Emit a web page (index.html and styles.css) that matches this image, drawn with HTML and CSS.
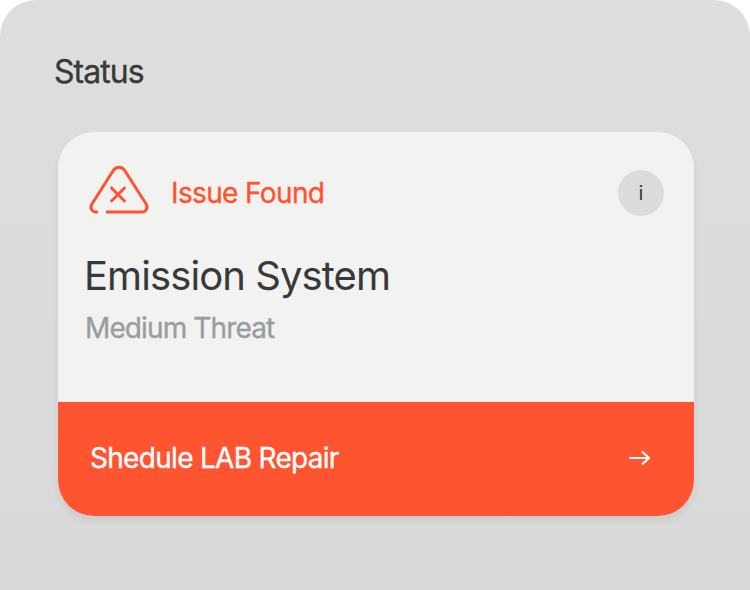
FILE: index.html
```html
<!DOCTYPE html>
<html lang="en">
<head>
<meta charset="utf-8">
<title>Status</title>
<link rel="stylesheet" href="styles.css">
</head>
<body>
<main class="panel">
  <h1 class="heading"><span>Status</span></h1>
  <section class="card">
    <div class="details">
      <div class="alert">
        <svg class="warning" width="64" height="54" viewBox="0 0 64 54" fill="none" stroke="currentColor" stroke-width="3" stroke-linejoin="round">
          <path d="M11 49H9C4.500 49 2.500 44.500 5.200 40.500L26.300 7.500C29.200 3 34.800 3 37.700 7.500L58.800 40.500C61.500 44.500 59.500 49 55 49H19"/>
          <path stroke-linecap="round" d="M24.500 25L37.500 38M37.500 25L24.500 38"/>
        </svg>
        <span class="alert-text">Issue Found</span>
        <button class="info" aria-label="Information">i</button>
      </div>
      <h2 class="system"><span>Emission System</span></h2>
      <p class="threat"><span>Medium Threat</span></p>
    </div>
    <button class="repair">
      <span class="repair-text">Shedule LAB Repair</span>
      <svg class="arrow" width="24" height="20" viewBox="0 0 24 20" fill="none" stroke="currentColor" stroke-width="2"><path d="M1 10H22M14 3.500L21 10L14 16.500"/></svg>
    </button>
  </section>
</main>
</body>
</html>
```

FILE: styles.css
```css
* { box-sizing: border-box; }
body { margin: 0; background: #fff; font-family: Inter, "Liberation Sans", sans-serif; color: #393939; }
h1, h2, p { margin: 0; font-weight: 400; }
button { border: 0; font: inherit; }
.panel { height: 590px; padding: 52px 56px 0 58px; border-radius: 36px 36px 0 0; background: linear-gradient(#dedede, #dadada); }
.heading, .alert-text, .threat, .repair-text { -webkit-text-stroke: .35px currentColor; }
.heading { height: 80px; margin-left: -4px; font-size: 32px; line-height: 40px; letter-spacing: -.95px; }
.card { height: 384px; overflow: hidden; border-radius: 36px; background: #f2f2f0; box-shadow: 0 6px 10px -1px #00000014; }
.details { height: 270px; padding: 31px 30px 0 27px; }
.alert { display: flex; align-items: center; height: 60px; color: #ff5330; }
.warning { margin: -7px 0 0 2px; }
.alert-text { margin: -1px 0 0 20px; font-size: 28px; letter-spacing: -.63px; }
.info { width: 46px; height: 46px; margin-left: auto; border-radius: 50%; background: #dcdcdc; color: #393939; font-size: 20px; }
.system { margin: 28px 0 0 -1px; font-size: 40px; line-height: 50px; letter-spacing: -.92px; }
.threat { margin-top: 10px; color: #999da0; font-size: 28px; line-height: 34px; letter-spacing: -.88px; }
.repair { display: flex; align-items: center; justify-content: space-between; width: 100%; height: 114px; padding: 0 42px 2px 32px; background: #ff5430; color: #fff; }
.repair-text { font-size: 28px; letter-spacing: -.7px; }
```
